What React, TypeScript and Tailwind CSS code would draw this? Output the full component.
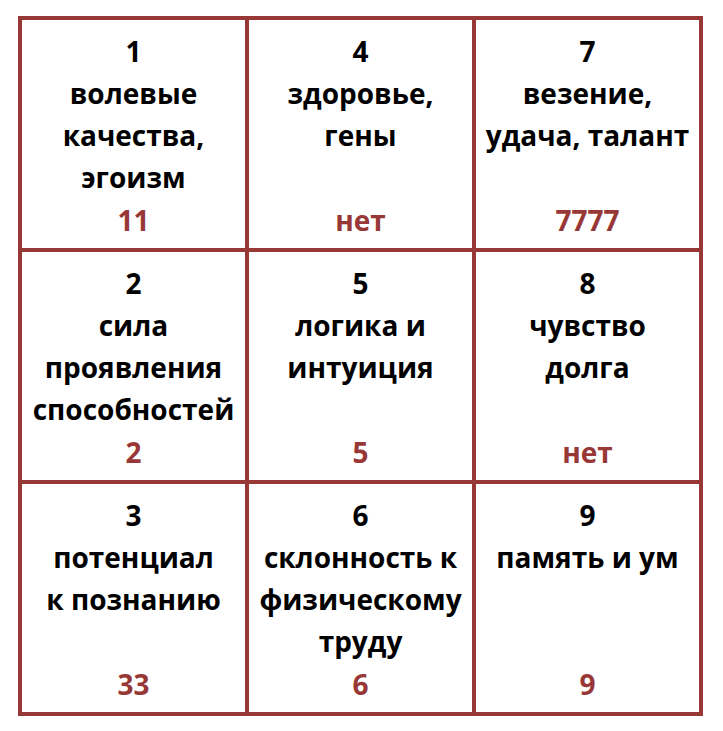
import React from "react";

type Cell = { num: string; lines: string[]; value: string };

const cells: Cell[] = [
  { num: "1", lines: ["волевые", "качества,", "эгоизм"], value: "11" },
  { num: "4", lines: ["здоровье,", "гены"], value: "нет" },
  { num: "7", lines: ["везение,", "удача, талант"], value: "7777" },
  { num: "2", lines: ["сила", "проявления", "способностей"], value: "2" },
  { num: "5", lines: ["логика и", "интуиция"], value: "5" },
  { num: "8", lines: ["чувство", "долга"], value: "нет" },
  { num: "3", lines: ["потенциал", "к познанию"], value: "33" },
  { num: "6", lines: ["склонность к", "физическому", "труду"], value: "6" },
  { num: "9", lines: ["память и ум"], value: "9" },
];

export default function App() {
  return (
    <div className="w-[723px] h-[731px] bg-white pl-[18px] pt-[16px]">
      <div
        className="grid grid-cols-3 grid-rows-3 gap-[4px] p-[4px] bg-[#973836] w-[685px] h-[700px] text-black font-bold text-[28px] leading-[42px]"
        style={{ fontFamily: '"Open Sans", "Noto Sans", sans-serif' }}
      >
        {cells.map((c) => (
          <div
            key={c.num}
            className="bg-white flex flex-col items-center text-center pt-[10px] pb-[7px] whitespace-nowrap"
          >
            <div>{c.num}</div>
            {c.lines.map((l) => (
              <div key={l}>{l}</div>
            ))}
            <div className="mt-auto text-[#973836]">{c.value}</div>
          </div>
        ))}
      </div>
    </div>
  );
}
